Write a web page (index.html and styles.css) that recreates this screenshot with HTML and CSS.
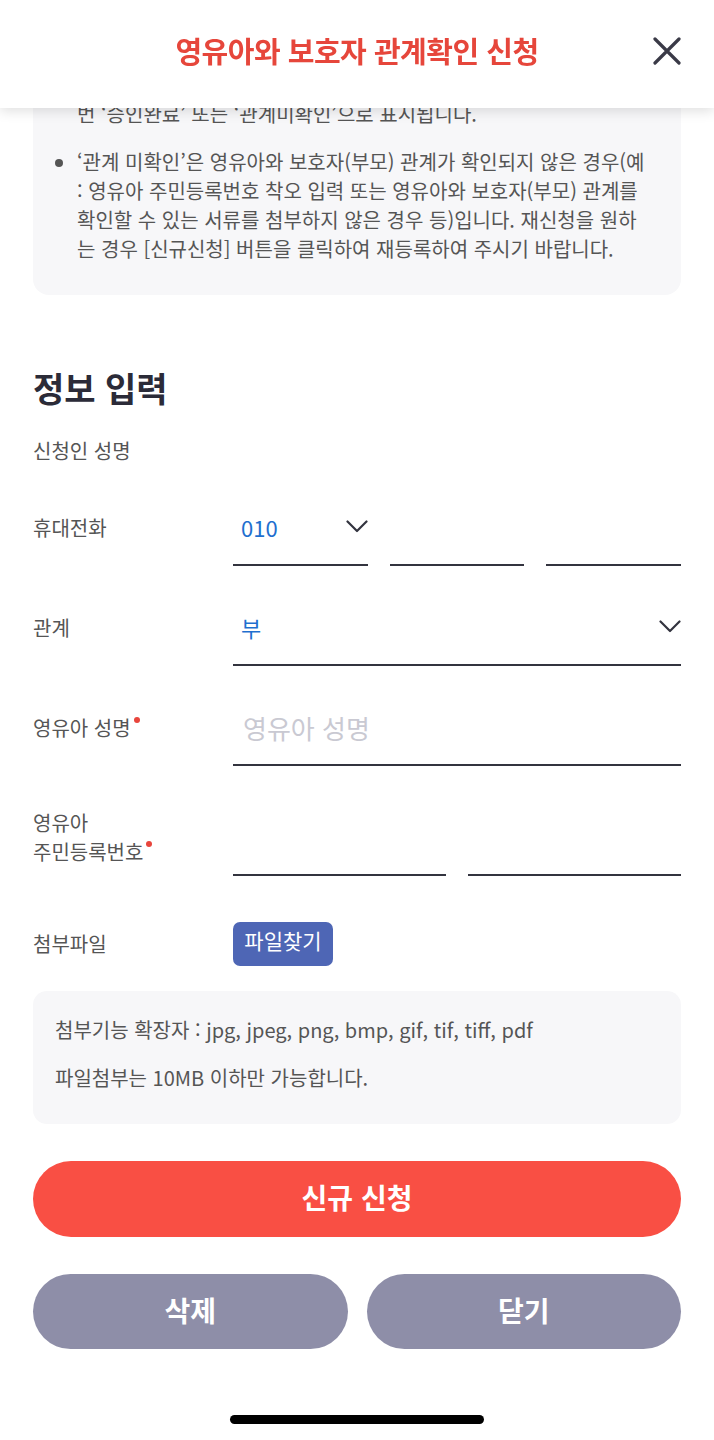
FILE: index.html
```html
<!DOCTYPE html>
<html lang="ko">
<head>
<meta charset="utf-8">
<title>영유아와 보호자 관계확인 신청</title>
<link rel="stylesheet" href="styles.css">
</head>
<body>
<header class="topbar">
  <h1 class="topbar-title">영유아와 보호자 관계확인 신청</h1>
  <button class="close-btn" type="button" aria-label="닫기">
    <svg width="28" height="28" viewBox="0 0 28 28" aria-hidden="true"><path d="M2 2 L26 26 M26 2 L2 26" fill="none" stroke="#3a3a47" stroke-width="3.2" stroke-linecap="round"/></svg>
  </button>
</header>

<main class="page">
  <section class="guide">
    <p class="guide-cont">번 ‘승인완료’ 또는 ‘관계미확인’으로 표시됩니다.</p>
    <ul class="guide-list">
      <li>‘관계 미확인’은 영유아와 보호자(부모) 관계가 확인되지 않은 경우(예<br>: 영유아 주민등록번호 착오 입력 또는 영유아와 보호자(부모) 관계를<br>확인할 수 있는 서류를 첨부하지 않은 경우 등)입니다. 재신청을 원하<br>는 경우 [신규신청] 버튼을 클릭하여 재등록하여 주시기 바랍니다.</li>
    </ul>
  </section>

  <h2 class="section-title">정보 입력</h2>

  <form class="form">
    <div class="row row--plain">
      <div class="label">신청인 성명</div>
      <div class="value"></div>
    </div>

    <div class="row">
      <div class="label">휴대전화</div>
      <div class="phone">
        <div class="field select">
          <span class="select-value">010</span>
          <svg class="chevron" width="22" height="13" viewBox="0 0 22 13" aria-hidden="true"><path d="M1.5 1.5 L11 11 L20.5 1.5" fill="none" stroke="#33343f" stroke-width="2.2" stroke-linecap="round" stroke-linejoin="round"/></svg>
        </div>
        <div class="field"><input class="text-input" type="tel" aria-label="휴대전화 가운데 자리"></div>
        <div class="field"><input class="text-input" type="tel" aria-label="휴대전화 끝 자리"></div>
      </div>
    </div>

    <div class="row">
      <div class="label">관계</div>
      <div class="field select">
        <span class="select-value">부</span>
        <svg class="chevron" width="22" height="13" viewBox="0 0 22 13" aria-hidden="true"><path d="M1.5 1.5 L11 11 L20.5 1.5" fill="none" stroke="#33343f" stroke-width="2.2" stroke-linecap="round" stroke-linejoin="round"/></svg>
      </div>
    </div>

    <div class="row">
      <div class="label">영유아 성명<span class="req"></span></div>
      <div class="field"><input class="text-input text-input--name" type="text" placeholder="영유아 성명"></div>
    </div>

    <div class="row row--rrn">
      <div class="label label--two">영유아<br>주민등록번호<span class="req"></span></div>
      <div class="rrn">
        <div class="field"><input class="text-input" type="text" aria-label="주민등록번호 앞자리"></div>
        <div class="field"><input class="text-input" type="password" aria-label="주민등록번호 뒷자리"></div>
      </div>
    </div>

    <div class="row row--file">
      <div class="label">첨부파일</div>
      <div><button class="file-btn" type="button">파일찾기</button></div>
    </div>
  </form>

  <section class="notice">
    <p>첨부기능 확장자 : jpg, jpeg, png, bmp, gif, tif, tiff, pdf</p>
    <p>파일첨부는 10MB 이하만 가능합니다.</p>
  </section>

  <button class="primary-btn" type="button">신규 신청</button>
  <div class="btn-row">
    <button class="secondary-btn" type="button">삭제</button>
    <button class="secondary-btn" type="button">닫기</button>
  </div>

  <div class="home-indicator"></div>
</main>
</body>
</html>
```

FILE: styles.css
```css
* { box-sizing: border-box; }
html, body { margin: 0; padding: 0; }
body {
  font-family: "Noto Sans CJK KR", "Noto Sans", sans-serif;
  background: #fff;
  color: #555;
  width: 714px;
  overflow: hidden;
}

/* header */
.topbar {
  position: fixed;
  top: 0; left: 0; right: 0;
  height: 108px;
  background: #fff;
  box-shadow: 0 3px 12px rgba(0,0,0,0.13);
  display: grid;
  grid-template-columns: 1fr auto 1fr;
  align-items: center;
  padding: 0 33px 6px;
  z-index: 10;
}
.topbar-title {
  grid-column: 2;
  margin: 0 0 2px;
  font-size: 29px;
  line-height: 40px;
  font-weight: 700;
  letter-spacing: -0.5px;
  color: #e6463b;
}
.close-btn {
  grid-column: 3;
  justify-self: end;
  border: 0;
  background: none;
  padding: 0;
  width: 28px;
  height: 28px;
  display: flex;
}

/* page */
.page { padding: 0 33px; }

.guide {
  background: #f7f7f9;
  border-radius: 16px;
  padding: 99px 18px 32px 24px;
  font-size: 20px;
  line-height: 29px;
  color: #555;
}
.guide-cont { margin: 0 0 19px; padding-left: 20px; }
.guide-list { margin: 0; padding-left: 20px; white-space: nowrap; }

.section-title {
  margin: 73px 0 0;
  font-size: 34px;
  line-height: 40px;
  font-weight: 700;
  color: #2b2b38;
}

/* form */
.form {
  display: flex;
  flex-direction: column;
  gap: 47px;
  margin: 28px 0 0;
}
.row {
  display: grid;
  grid-template-columns: 200px 1fr;
  align-items: end;
}
.label {
  font-size: 20px;
  line-height: 30px;
  padding-bottom: 23px;
  color: #555;
}
.row--plain { align-items: center; }
.row--plain .label { padding-bottom: 0; }
.row--rrn { margin-top: -5px; }
.label--two { line-height: 29px; padding-bottom: 10px; }
.row--file { align-items: center; margin-top: -1px; }
.row--file .label { padding-bottom: 0; }

.req {
  display: inline-block;
  width: 6px;
  height: 6px;
  border-radius: 50%;
  background: #e8453c;
  vertical-align: top;
  margin: 4px 0 0 3px;
}

.field {
  display: flex;
  align-items: center;
  height: 53px;
  padding-bottom: 21px;
  border-bottom: 2px solid #33343f;
}
.select { justify-content: space-between; padding-left: 8px; padding-bottom: 23px; }
.select .chevron { margin-top: -2px; }
.select-value { font-size: 22px; line-height: 30px; color: #1f6fcf; }

.phone, .rrn {
  display: grid;
  grid-template-columns: repeat(3, 1fr);
  gap: 22px;
}
.rrn { grid-template-columns: 1fr 1fr; }

.text-input {
  width: 100%;
  height: 30px;
  border: 0;
  outline: none;
  background: transparent;
  padding: 0 0 0 8px;
  font-family: inherit;
  font-size: 22px;
  line-height: 30px;
  color: #333;
}
.text-input--name { font-size: 26px; padding-left: 10px; }
.text-input::placeholder { color: #c9c9d2; }

.file-btn {
  height: 44px;
  width: 100px;
  border: 0;
  border-radius: 7px;
  background: #4e66b5;
  color: #fff;
  font-family: inherit;
  font-size: 21px;
  line-height: 30px;
  padding: 0 0 8px;
}

.notice {
  margin-top: 25px;
  background: #f7f7f9;
  border-radius: 14px;
  padding: 24px 22px 32px;
  font-size: 20px;
  line-height: 29px;
  color: #555;
}
.notice p { margin: 0; }
.notice p + p { margin-top: 19px; }

.primary-btn, .secondary-btn {
  border: 0;
  color: #fff;
  font-family: inherit;
  font-size: 28px;
  font-weight: 700;
  line-height: 1;
  padding: 0 0 4px;
}
.primary-btn {
  display: block;
  width: 100%;
  height: 76px;
  margin-top: 37px;
  border-radius: 38px;
  background: #f94f44;
}
.btn-row {
  display: grid;
  grid-template-columns: 1fr 1fr;
  gap: 19px;
  margin-top: 37px;
}
.secondary-btn {
  height: 75px;
  border-radius: 38px;
  background: #8e8ea8;
}

.home-indicator {
  width: 254px;
  height: 9px;
  border-radius: 5px;
  background: #000;
  margin: 66px auto 0;
}
```
